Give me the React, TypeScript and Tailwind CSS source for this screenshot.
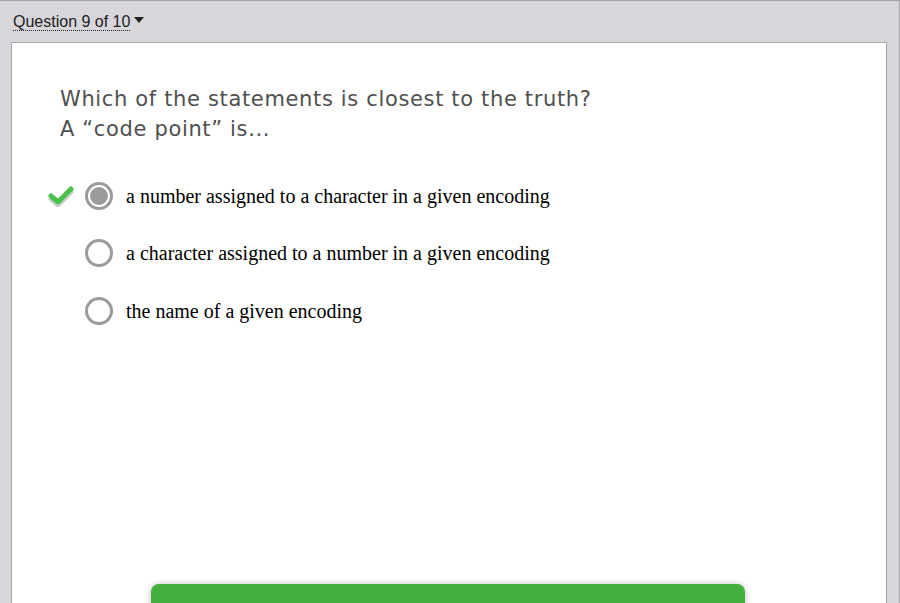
export default function App() {
  const options = [
    { text: "a number assigned to a character in a given encoding", selected: true },
    { text: "a character assigned to a number in a given encoding", selected: false },
    { text: "the name of a given encoding", selected: false },
  ];

  return (
    <div className="h-[603px] w-full overflow-hidden border-t border-r border-[#a5a3a8] bg-[#d8d6db]">
      <div className="flex h-[41px] items-center pl-[13px]">
        <button className="flex items-center gap-[4px] text-[16px] text-[#222] [font-family:'Liberation_Sans',Arial,sans-serif]">
          <span className="border-b border-dotted border-[#222] leading-[17px]">Question 9 of 10</span>
          <svg width="10" height="6" viewBox="0 0 10 6" className="mb-[3px]">
            <path d="M0 0 L10 0 L5 6 Z" fill="#222" />
          </svg>
        </button>
      </div>
      <div className="ml-[11px] mr-[12px] h-[600px] border border-[#a8a6ab] bg-white">
        <div className="px-[48px] pt-[41px] text-[21px] leading-[30px] tracking-[0.65px] text-[#505050] [font-family:'DejaVu_Sans',Verdana,sans-serif]">
          <p>Which of the statements is closest to the truth?</p>
          <p>A “code point” is...</p>
        </div>
        <div className="mt-[23px] flex flex-col">
          {options.map((o) => (
            <div key={o.text} className="flex h-[57.5px] items-center">
              <div className="flex w-[73px] justify-end pr-[11px]">
                {o.selected && (
                  <svg width="26" height="22" viewBox="0 0 26 22">
                    <path d="M3 12 L10 18 L23 5" fill="none" stroke="#cfcfcf" strokeWidth="5" strokeLinecap="round" strokeLinejoin="round" transform="translate(0 2)" />
                    <path d="M3 11 L10 17 L23 4" fill="none" stroke="#4cc14c" strokeWidth="5" strokeLinecap="round" strokeLinejoin="round" />
                  </svg>
                )}
              </div>
              <div className="flex h-[28px] w-[28px] items-center justify-center rounded-full border-[3px] border-[#9b9b9b]">
                {o.selected && <div className="h-[18px] w-[18px] rounded-full bg-[#9b9b9b]" />}
              </div>
              <span className="ml-[13px] text-[20px] text-black [font-family:'Liberation_Serif','Times_New_Roman',serif]">
                {o.text}
              </span>
            </div>
          ))}
        </div>
        <div className="ml-[139px] mt-[244px] h-[40px] w-[594px] rounded-[8px] bg-[#45b03f] shadow-[0_0_6px_rgba(0,0,0,0.25)]" />
      </div>
    </div>
  );
}
